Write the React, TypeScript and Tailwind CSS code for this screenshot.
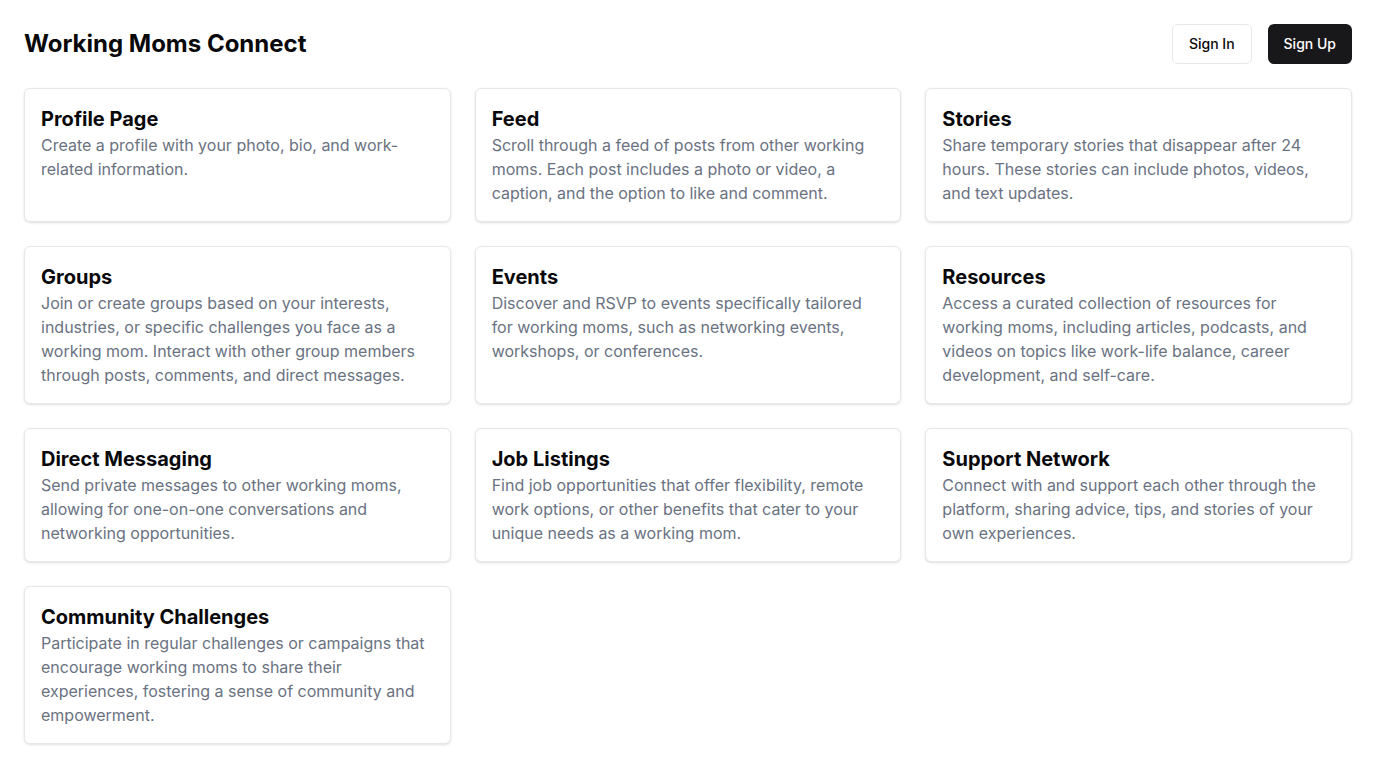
import React from "react";

const items = [
  { t: "Profile Page", d: "Create a profile with your photo, bio, and work-related information." },
  { t: "Feed", d: "Scroll through a feed of posts from other working moms. Each post includes a photo or video, a caption, and the option to like and comment." },
  { t: "Stories", d: "Share temporary stories that disappear after 24 hours. These stories can include photos, videos, and text updates." },
  { t: "Groups", d: "Join or create groups based on your interests, industries, or specific challenges you face as a working mom. Interact with other group members through posts, comments, and direct messages." },
  { t: "Events", d: "Discover and RSVP to events specifically tailored for working moms, such as networking events, workshops, or conferences." },
  { t: "Resources", d: "Access a curated collection of resources for working moms, including articles, podcasts, and videos on topics like work-life balance, career development, and self-care." },
  { t: "Direct Messaging", d: "Send private messages to other working moms, allowing for one-on-one conversations and networking opportunities." },
  { t: "Job Listings", d: "Find job opportunities that offer flexibility, remote work options, or other benefits that cater to your unique needs as a working mom." },
  { t: "Support Network", d: "Connect with and support each other through the platform, sharing advice, tips, and stories of your own experiences." },
  { t: "Community Challenges", d: "Participate in regular challenges or campaigns that encourage working moms to share their experiences, fostering a sense of community and empowerment." },
];

export default function App() {
  return (
    <div className="min-h-screen bg-white p-6 flex flex-col gap-6 text-[#09090b]" style={{ fontFamily: "Inter, 'Noto Sans', sans-serif" }}>
      <header className="flex items-center justify-between h-10">
        <h1 className="text-2xl font-bold">Working Moms Connect</h1>
        <div className="flex gap-4">
          <button className="h-10 px-4 rounded-md border border-gray-200 bg-white text-sm font-medium">Sign In</button>
          <button className="h-10 px-4 rounded-md bg-[#18181b] text-white text-sm font-medium">Sign Up</button>
        </div>
      </header>
      <div className="grid grid-cols-3 gap-6">
        {items.map((it) => (
          <div key={it.t} className="rounded-md border border-gray-200 shadow-sm bg-white p-4">
            <h2 className="text-xl font-bold leading-7">{it.t}</h2>
            <p className="text-base leading-6 text-gray-500">{it.d}</p>
          </div>
        ))}
      </div>
    </div>
  );
}
